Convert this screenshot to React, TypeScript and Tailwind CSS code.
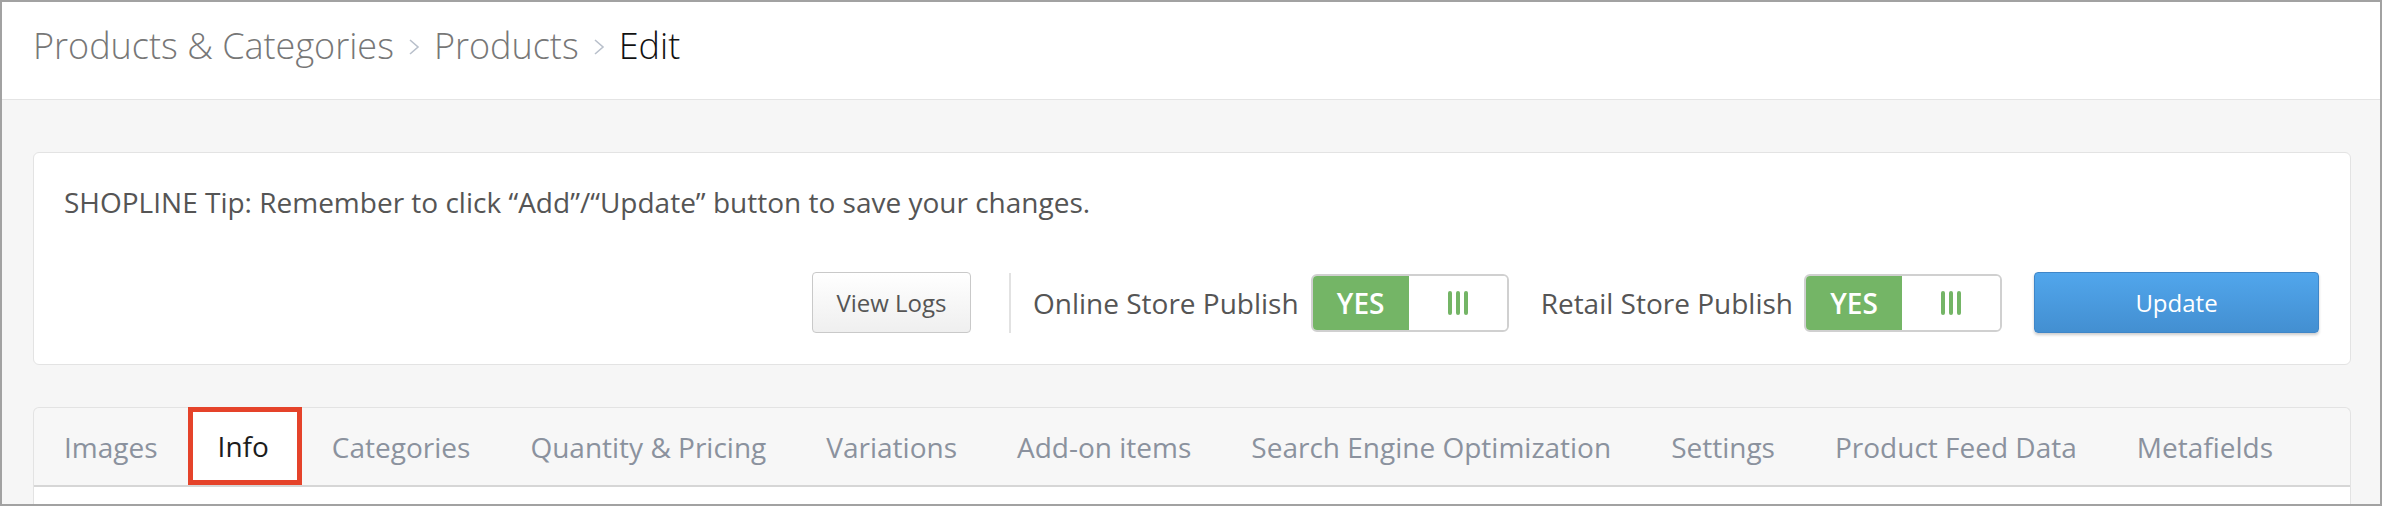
import React from "react";

const tabs = [
  "Images",
  "Info",
  "Categories",
  "Quantity & Pricing",
  "Variations",
  "Add-on items",
  "Search Engine Optimization",
  "Settings",
  "Product Feed Data",
  "Metafields",
];

const Chevron = () => (
  <svg width="12" height="16" viewBox="0 0 12 16" className="mx-[14px] mt-[2px]">
    <path d="M2 1 L10 8 L2 15" fill="none" stroke="#b9c0cb" strokeWidth="1.6" />
  </svg>
);

const Toggle = () => (
  <div className="flex h-[58px] w-[198px] overflow-hidden rounded-[6px] border-2 border-[#d0d0d0]">
    <div className="flex w-[96px] items-center justify-center bg-[#74b566] text-[28px] font-semibold text-white">
      YES
    </div>
    <div className="flex flex-1 items-center justify-center gap-[4px] bg-white">
      <span className="h-[24px] w-[4px] rounded-full bg-[#74b566]" />
      <span className="h-[24px] w-[4px] rounded-full bg-[#74b566]" />
      <span className="h-[24px] w-[4px] rounded-full bg-[#74b566]" />
    </div>
  </div>
);

const App = () => {
  return (
    <div className="flex h-[506px] w-[2382px] flex-col overflow-hidden border-2 border-[#a2a2a2] bg-[#f6f6f6] font-['Open_Sans',sans-serif]">
      {/* breadcrumb */}
      <div className="h-[98px] shrink-0 border-b border-[#e4e4e4] bg-white pl-[31px] pt-[17px]">
        <div className="flex items-center text-[36px] leading-[54px] font-light">
          <span className="text-[#777]">Products &amp; Categories</span>
          <Chevron />
          <span className="text-[#777]">Products</span>
          <Chevron />
          <span className="text-[#111]">Edit</span>
        </div>
      </div>

      {/* tip card */}
      <div className="ml-[31px] mr-[29px] mt-[52px] h-[213px] shrink-0 rounded-[6px] border border-[#e3e3e3] bg-white pl-[30px] pr-[31px] pt-[29px]">
        <p className="text-[28px] leading-[40px] text-[#555]">
          SHOPLINE Tip: Remember to click “Add”/“Update” button to save your changes.
        </p>
        <div className="mt-[50px] flex items-center justify-end">
          <button className="h-[61px] w-[159px] rounded-[4px] border border-[#c9c9c9] bg-gradient-to-b from-white to-[#efefef] text-[24px] text-[#555]">
            View Logs
          </button>
          <div className="ml-[38px] mr-[22px] h-[60px] w-[2px] bg-[#e2e2e2]" />
          <span className="mr-[12px] text-[28px] text-[#555]">Online Store Publish</span>
          <Toggle />
          <span className="ml-[32px] mr-[11px] text-[28px] text-[#555]">Retail Store Publish</span>
          <Toggle />
          <button className="ml-[32px] h-[61px] w-[285px] rounded-[4px] border border-[#3f86c8] bg-gradient-to-b from-[#51a6ec] to-[#438fd1] text-[24px] text-white shadow-[0_2px_3px_rgba(0,0,0,0.2)]">
            Update
          </button>
        </div>
      </div>

      {/* tabs card */}
      <div className="ml-[31px] mr-[29px] mt-[42px] flex flex-1 flex-col rounded-t-[6px] border border-b-0 border-[#e3e3e3] bg-[#f7f7f7]">
        <div className="flex h-[79px] shrink-0 border-b-2 border-[#d6d6d6]">
          {tabs.map((t) =>
            t === "Info" ? (
              <div
                key={t}
                className="-mt-px flex h-[78px] items-center border-[5px] border-[#e5432a] bg-white pl-[25px] pr-[28px] text-[28px] text-[#1c1c1c]"
              >
                {t}
              </div>
            ) : (
              <div key={t} className="flex items-center px-[30px] text-[28px] text-[#8b929e]">
                {t}
              </div>
            )
          )}
        </div>
        <div className="flex-1 bg-white" />
      </div>
    </div>
  );
};

export default App;
